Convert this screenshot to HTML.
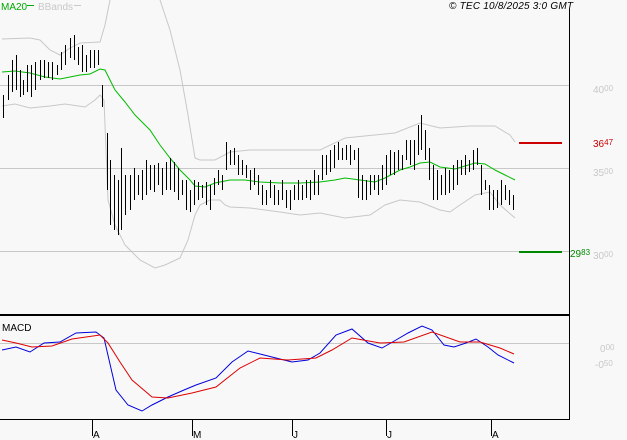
<!DOCTYPE html><html><head><style>body{margin:0;background:#f8f8f8}svg{display:block}text{font-family:"Liberation Sans",sans-serif}</style></head><body>
<svg width="627" height="440" viewBox="0 0 627 440" xmlns="http://www.w3.org/2000/svg">
<rect width="627" height="440" fill="#f8f8f8"/>
<g stroke="#c8c8c8" stroke-width="1">
<line x1="0" y1="85.5" x2="569" y2="85.5"/><line x1="0" y1="168.5" x2="569" y2="168.5"/><line x1="0" y1="251.5" x2="569" y2="251.5"/><line x1="0" y1="343.5" x2="569" y2="343.5"/></g>
<line x1="569.5" y1="9" x2="569.5" y2="420" stroke="#000"/>
<line x1="0" y1="315" x2="569" y2="315" stroke="#000" stroke-width="2"/>
<line x1="0" y1="419.5" x2="569" y2="419.5" stroke="#000"/>
<g fill="none" stroke="#c8c8c8" stroke-width="1">
<polyline points="2,39 30,38 40,40 50,50 60,55 70,48 80,43 100,42 105,25 110,0"/>
<polyline points="160,0 170,30 180,70 188,115 195,158 200,160 215,160 230,152 250,150 320,150 345,138 395,133 420,123 440,128 470,126 495,126 510,135 515,142"/>
<polyline points="2,106 15,104 30,108 50,106 65,104 85,107 95,100 100,95 104,100 106,150 108,200 115,225 125,245 140,260 155,268 165,265 180,258 188,240 195,215 200,205 210,200 220,200 225,205 230,207 250,208 280,212 300,215 320,213 345,218 370,215 385,205 400,200 420,202 440,210 450,212 460,205 475,195 490,192 500,205 515,218"/>
</g>
<polyline fill="none" stroke="#00bb00" stroke-width="1" points="2,72 15,71 30,73 45,77 60,79 70,77 80,75 90,74 100,69 105,70 115,90 125,102 135,115 150,130 160,145 170,158 180,170 190,180 195,186 205,187 215,183 230,180 245,180 260,182 280,183 300,183 320,182 335,180 345,178 360,180 375,182 385,178 400,170 410,167 420,163 430,162 440,167 455,169 465,166 475,163 485,164 495,170 505,175 515,180"/>
<g stroke="#000" stroke-width="1">
<path d="M3.5 95V118M8.5 75V100M12.5 60V92M16.5 55V90M20.5 70V97M23.5 80V95M27.5 65V92M31.5 65V97M35.5 62V90M40.5 60V80M44.5 60V78M48.5 62V78M52.5 62V80M57.5 65V75M61.5 52V70M65.5 45V65M70.5 38V58M74.5 35V60M78.5 47V65M82.5 45V72M86.5 55V72M90.5 50V68M94.5 50V68M98.5 50V65M102.5 85V107M107.5 133V190M110.5 160V225M114.5 175V230M118.5 180V235M121.5 148V230M125.5 175V215M130.5 175V210M134.5 168V200M138.5 175V195M142.5 170V200M146.5 160V195M150.5 165V190M154.5 165V192M158.5 163V185M162.5 168V195M166.5 162V190M170.5 158V190M174.5 162V192M178.5 168V200M182.5 180V195M186.5 180V210M190.5 190V212M194.5 180V205M198.5 182V200M202.5 185V198M206.5 182V205M210.5 185V210M214.5 178V195M218.5 170V185M222.5 175V190M226.5 142V170M230.5 150V165M234.5 148V165M238.5 155V175M242.5 160V175M246.5 165V178M250.5 170V190M254.5 168V185M258.5 175V195M262.5 185V205M266.5 190V205M270.5 180V198M274.5 185V205M278.5 190V205M282.5 180V200M286.5 190V208M290.5 190V210M294.5 185V200M298.5 180V200M302.5 185V200M306.5 180V198M310.5 180V200M314.5 170V195M318.5 175V195M322.5 155V180M326.5 155V175M330.5 150V172M334.5 145V168M338.5 142V160M342.5 148V160M346.5 145V160M350.5 145V165M354.5 150V160M358.5 148V198M362.5 175V200M366.5 180V200M370.5 175V195M374.5 175V190M378.5 175V195M382.5 165V190M386.5 155V185M390.5 150V175M394.5 152V175M398.5 150V170M402.5 155V170M406.5 140V160M410.5 140V165M414.5 140V170M418.5 125V155M421.5 115V150M425.5 130V160M429.5 148V180M433.5 165V200M437.5 170V200M441.5 175V195M445.5 168V195M449.5 170V193M453.5 165V190M457.5 160V185M461.5 160V175M465.5 155V175M469.5 160V172M473.5 150V170M477.5 148V165M481.5 165V195M485.5 180V190M489.5 185V210M493.5 190V210M497.5 190V208M501.5 180V205M505.5 185V200M509.5 190V205M513.5 195V210"/>
</g>
<line x1="519" y1="143" x2="562" y2="143" stroke="#cc0000" stroke-width="2"/>
<line x1="519" y1="252" x2="562" y2="252" stroke="#008800" stroke-width="2"/>
<polyline fill="none" stroke="#0000dd" stroke-width="1" points="2,350 16,347 30,352 44,343 60,342 76,333 96,332 104,338 116,390 128,405 142,411 152,405 168,397 184,390 196,385 216,378 232,362 248,351 264,355 280,359 292,362 308,360 320,353 336,335 352,329 368,343 382,348 396,340 408,333 422,326 432,330 444,345 454,347 466,343 476,339 488,347 498,355 514,363"/>
<polyline fill="none" stroke="#dd0000" stroke-width="1" points="2,340 16,343 32,347 52,346 72,339 100,335 108,343 120,362 132,380 152,397 168,398 192,393 216,387 240,368 260,358 288,360 316,358 332,350 352,338 380,343 404,342 432,332 460,342 480,342 500,348 514,354"/>
<g font-size="10">
<text x="1" y="10" fill="#00aa00">MA20</text><line x1="27" y1="5.5" x2="34" y2="5.5" stroke="#00aa00"/>
<text x="38" y="10" fill="#c8c8c8">BBands</text><line x1="74" y1="5.5" x2="81" y2="5.5" stroke="#c8c8c8"/>
<text x="449" y="9" fill="#000" font-style="italic" textLength="124">© TEC 10/8/2025 3:0 GMT</text>
<text x="2" y="331" fill="#000">MACD</text>
<text x="593" y="93" fill="#c8c8c8">40<tspan font-size="8" dy="-2">00</tspan></text>
<text x="593" y="176" fill="#c8c8c8">35<tspan font-size="8" dy="-2">00</tspan></text>
<text x="593" y="259" fill="#c8c8c8">30<tspan font-size="8" dy="-2">00</tspan></text>
<text x="593" y="147" fill="#cc0000">36<tspan font-size="8" dy="-2">47</tspan></text>
<text x="570" y="257" fill="#008800">29<tspan font-size="8" dy="-2">83</tspan></text>
<text x="600" y="352" fill="#c8c8c8">0<tspan font-size="8" dy="-2">00</tspan></text>
<text x="595" y="368" fill="#c8c8c8">-0<tspan font-size="8" dy="-2">50</tspan></text>
<g fill="#000"><text x="93" y="438">A</text><text x="193" y="438">M</text><text x="293" y="438">J</text><text x="387" y="438">J</text><text x="492" y="438">A</text></g>
</g>
<g stroke="#000"><path d="M92.5 420V436M192.5 420V436M292.5 420V436M386.5 420V436M491.5 420V436"/></g>
</svg></body></html>
